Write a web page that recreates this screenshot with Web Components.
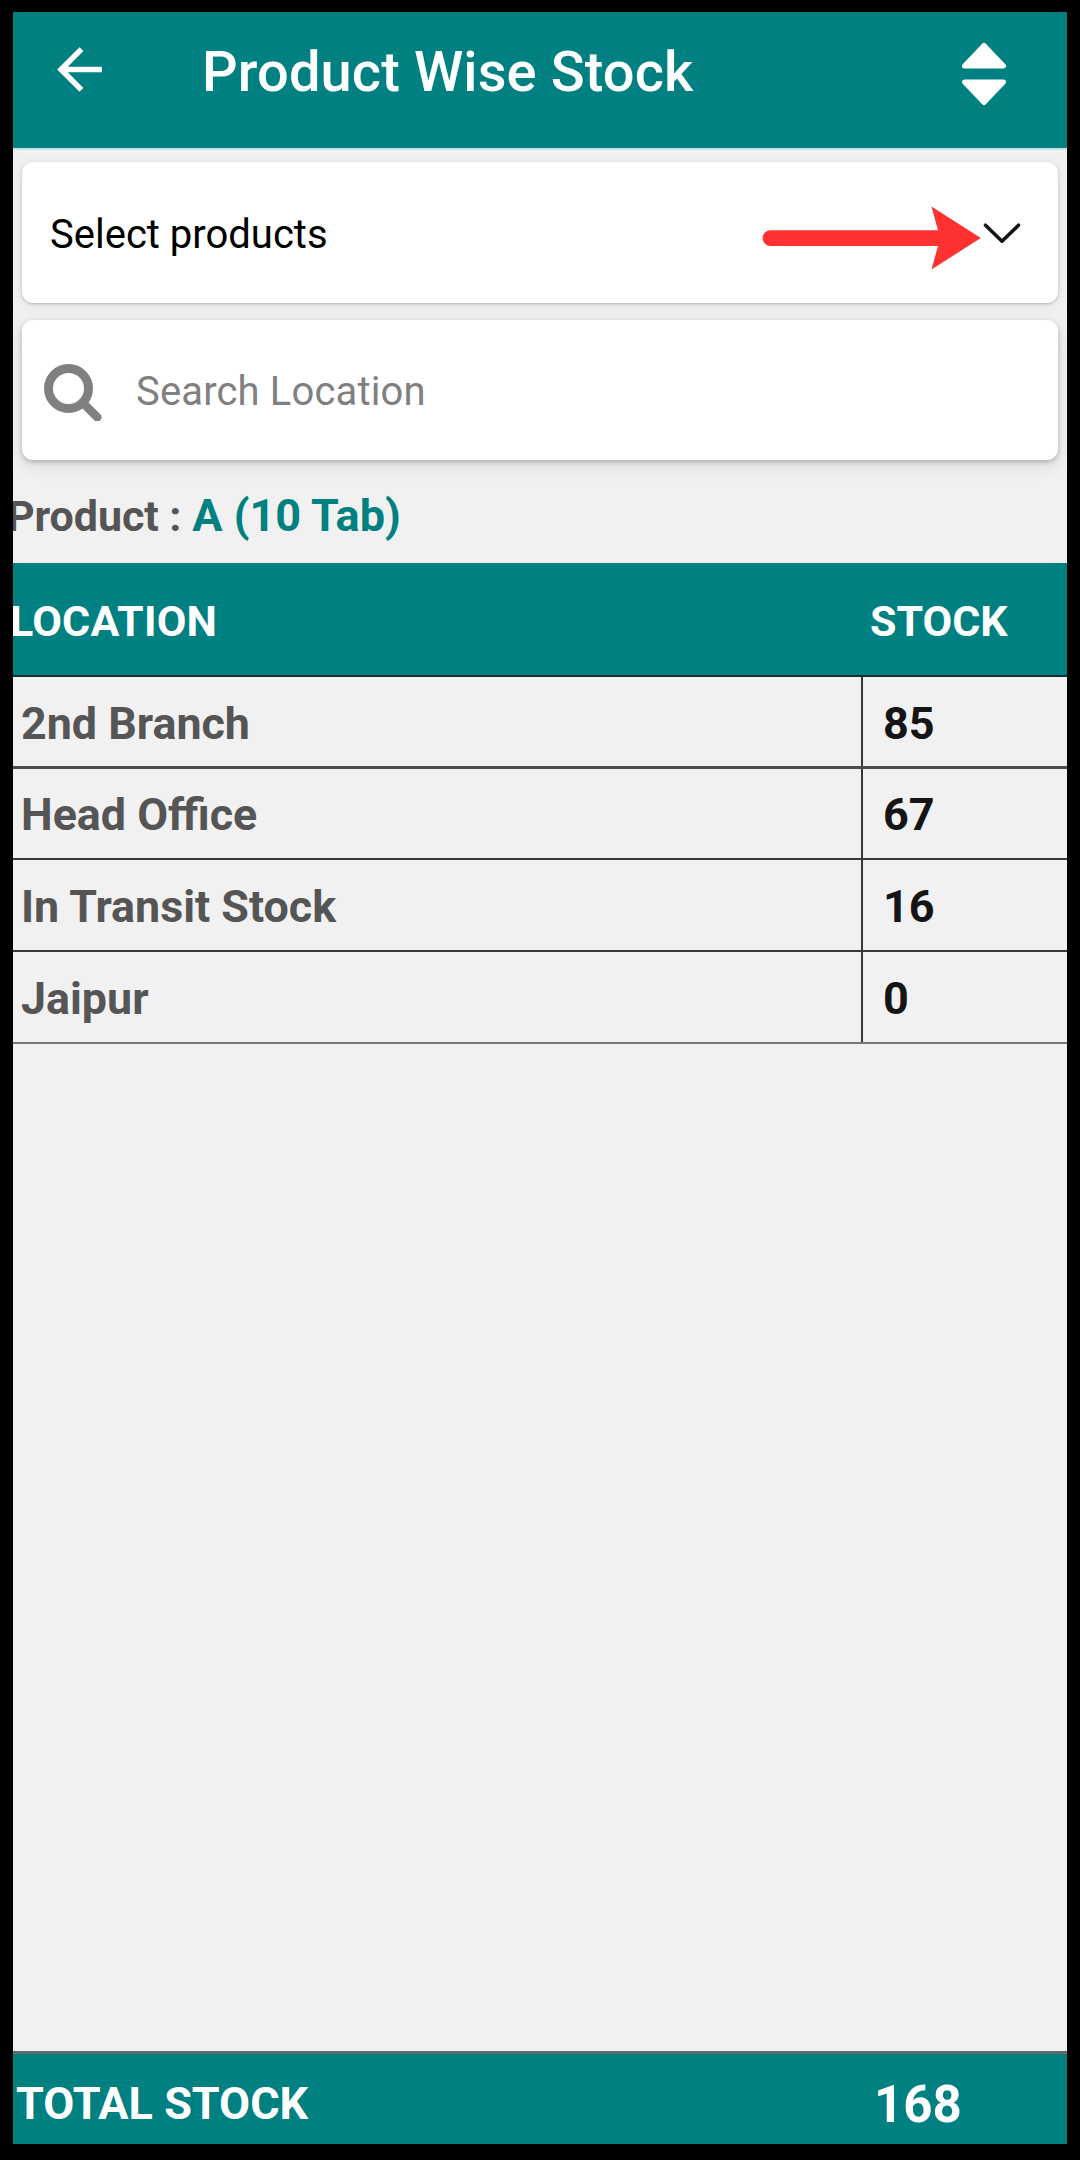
<!DOCTYPE html>
<html lang="en">
<head>
<meta charset="utf-8">
<title>Product Wise Stock</title>
<style>
    html, body {
        margin: 0;
        height: 100%;
        background: #000;
        font-family: Roboto, "Noto Sans", sans-serif;
    }
</style>
</head>
<body>
<stock-screen>
    <app-bar slot="bar">Product Wise Stock</app-bar>
    <product-select>Select products</product-select>
    <search-box>Search Location</search-box>
    <product-title label="Product :">A (10 Tab)</product-title>
    <stock-table>
        <stock-row stock="85" style="--h: 92px; --line: 3px solid #4d4d4d">2nd Branch</stock-row>
        <stock-row stock="67" style="--h: 91px; --text: 91px">Head Office</stock-row>
        <stock-row stock="16">In Transit Stock</stock-row>
        <stock-row stock="0" style="--line: 2px solid #777">Jaipur</stock-row>
    </stock-table>
    <total-bar slot="total" total="168">TOTAL STOCK</total-bar>
</stock-screen>

<script>
function makeTemplate(html) {
    const template = document.createElement('template');
    template.innerHTML = html;
    return template;
}

class BaseElement extends HTMLElement {
    constructor() {
        super();
        this._shadowRoot = this.attachShadow({ mode: 'open' });
        this._shadowRoot.appendChild(this.constructor.template.content.cloneNode(true));
    }
}

class StockScreen extends BaseElement {}
StockScreen.template = makeTemplate(`
    <style>
        :host {
            display: block;
            box-sizing: border-box;
            width: 1080px;
            height: 2160px;
            padding: 12px 13px 16px;
            background: #000;
        }

        .screen {
            display: flex;
            flex-flow: column nowrap;
            width: 1054px;
            height: 2132px;
            background: #f1f1f1;
            overflow: hidden;
        }

        .content {
            display: flex;
            flex-flow: column nowrap;
            flex: 1;
        }
    </style>
    <div class="screen">
        <slot name="bar"></slot>
        <div class="content"><slot></slot></div>
        <slot name="total"></slot>
    </div>
`);

class AppBar extends BaseElement {}
AppBar.template = makeTemplate(`
    <style>
        :host {
            display: flex;
            align-items: flex-start;
            box-sizing: border-box;
            height: 138px;
            background: #008080;
            border-bottom: 2px solid #c3e4e4;
            color: #fff;
        }

        .back {
            width: 67px;
            height: 67px;
            margin: 23.5px 0 0 32.5px;
        }

        .title {
            flex: 1;
            margin-left: 89.5px;
            font-size: 56px;
            font-weight: 500;
            letter-spacing: 0.1px;
            line-height: 120px;
            white-space: nowrap;
        }

        .sort {
            width: 46px;
            height: 64px;
            margin: 29.5px 60px 0 0;
        }
    </style>
    <svg class="back" viewBox="0 0 24 24" fill="#fff">
        <path d="M20 11H7.83l5.59-5.59L12 4l-8 8 8 8 1.41-1.41L7.83 13H20v-2z"/>
    </svg>
    <div class="title"><slot></slot></div>
    <svg class="sort" viewBox="0 0 46 64" fill="#fff" stroke="#fff" stroke-width="5" stroke-linejoin="round">
        <path d="M23 3.5L42.5 24H3.500z"/>
        <path d="M3.500 40H42.500L23 60.500z"/>
    </svg>
`);

class ProductSelect extends BaseElement {}
ProductSelect.template = makeTemplate(`
    <style>
        :host {
            position: relative;
            display: flex;
            align-items: center;
            justify-content: space-between;
            box-sizing: border-box;
            height: 141px;
            margin: 12px 9px 0;
            padding: 3px 36px 0 28px;
            border-radius: 11px;
            background: #fff;
            box-shadow: 0 1px 3px rgba(0, 0, 0, 0.22), 0 2px 14px rgba(0, 0, 0, 0.07);
            color: #000;
            font-size: 40px;
            line-height: 48px;
        }

        .text {
            padding-top: 2px;
        }

        .chevron {
            width: 40px;
            height: 24px;
        }

        /* red pointer drawn over the field */
        .pointer {
            position: absolute;
            left: 740px;
            top: 44px;
            width: 220px;
            height: 64px;
        }
    </style>
    <span class="text"><slot></slot></span>
    <svg class="chevron" viewBox="0 0 40 24" fill="none" stroke="#151515" stroke-width="3.600" stroke-linecap="round" stroke-linejoin="round">
        <path d="M3.500 3.200L20 19.200L36.500 3.200"/>
    </svg>
    <svg class="pointer" viewBox="0 0 220 64" fill="#ff3131">
        <path d="M8.500 24.200H176L169.500 0.500L218.800 32L169.500 63.500L176 40H8.500A7.900 7.900 0 0 1 8.500 24.200z"/>
    </svg>
`);

class SearchBox extends BaseElement {}
SearchBox.template = makeTemplate(`
    <style>
        :host {
            display: flex;
            align-items: center;
            box-sizing: border-box;
            height: 140px;
            margin: 17px 9px 0;
            padding: 2px 0 0 21px;
            border-radius: 11px;
            background: #fff;
            box-shadow: 0 2px 5px rgba(0, 0, 0, 0.22), 0 5px 18px rgba(0, 0, 0, 0.1);
            color: #808080;
            font-size: 40px;
            line-height: 48px;
        }

        svg {
            width: 60px;
            height: 60px;
            margin-right: 33px;
        }

        .text {
            padding-top: 2px;
            letter-spacing: 0.15px;
        }
    </style>
    <svg viewBox="0 0 60 60" fill="none" stroke="#808080" stroke-width="9">
        <circle cx="25.500" cy="27.500" r="20"/>
        <path d="M39.500 41.500L54.300 56.300" stroke-width="8.500" stroke-linecap="round"/>
    </svg>
    <span class="text"><slot></slot></span>
`);

class ProductTitle extends BaseElement {
    connectedCallback() {
        this._shadowRoot.querySelector('.label').textContent = this.getAttribute('label');
    }
}
ProductTitle.template = makeTemplate(`
    <style>
        :host {
            display: flex;
            box-sizing: border-box;
            height: 103px;
            padding-top: 26px;
            margin-left: -6px;
            font-size: 43px;
            font-weight: 700;
            line-height: 60px;
            white-space: nowrap;
        }

        .label {
            color: #555;
            letter-spacing: -0.1px;
            margin-right: 11px;
        }

        .name {
            color: #008080;
            font-size: 45px;
            line-height: 59px;
        }
    </style>
    <span class="label"></span>
    <span class="name"><slot></slot></span>
`);

class StockTable extends BaseElement {}
StockTable.template = makeTemplate(`
    <style>
        :host {
            display: block;
        }

        .head {
            display: flex;
            align-items: center;
            box-sizing: border-box;
            height: 114px;
            padding-top: 4px;
            background: #008080;
            border-bottom: 2px solid #152c2c;
            color: #fff;
            font-size: 43px;
            font-weight: 700;
        }

        .location {
            width: 860px;
            margin-left: -3px;
            letter-spacing: 0.25px;
        }
    </style>
    <div class="head">
        <div class="location">LOCATION</div>
        <div class="stock">STOCK</div>
    </div>
    <slot></slot>
`);

class StockRow extends BaseElement {
    connectedCallback() {
        this._shadowRoot.querySelector('.stock').textContent = this.getAttribute('stock');
    }
}
StockRow.template = makeTemplate(`
    <style>
        :host {
            display: flex;
            box-sizing: border-box;
            height: var(--h, 92px);
            border-bottom: var(--line, 2px solid #36393a);
            font-size: 45px;
            font-weight: 700;
            line-height: var(--text, 93px);
            white-space: nowrap;
        }

        .name {
            box-sizing: border-box;
            width: 848px;
            padding-left: 8px;
            color: #555;
            /* no letter-spacing here, it would break the ffi ligature */
            font-size: 44.800px;
        }

        .stock {
            flex: 1;
            border-left: 2px solid #36393a;
            padding-left: 20px;
            color: #151515;
        }
    </style>
    <div class="name"><slot></slot></div>
    <div class="stock"></div>
`);

class TotalBar extends BaseElement {
    connectedCallback() {
        this._shadowRoot.querySelector('.total').textContent = this.getAttribute('total');
    }
}
TotalBar.template = makeTemplate(`
    <style>
        :host {
            display: flex;
            box-sizing: border-box;
            height: 93px;
            border-top: 3px solid #5f6b6b;
            background: #008080;
            color: #fff;
            font-size: 45px;
            font-weight: 700;
            line-height: 100px;
            white-space: nowrap;
        }

        .label {
            width: 858px;
            padding-left: 3px;
        }

        .total {
            font-size: 51px;
            line-height: 102px;
        }
    </style>
    <div class="label"><slot></slot></div>
    <div class="total"></div>
`);

customElements.define('stock-screen', StockScreen);
customElements.define('app-bar', AppBar);
customElements.define('product-select', ProductSelect);
customElements.define('search-box', SearchBox);
customElements.define('product-title', ProductTitle);
customElements.define('stock-table', StockTable);
customElements.define('stock-row', StockRow);
customElements.define('total-bar', TotalBar);
</script>
</body>
</html>
